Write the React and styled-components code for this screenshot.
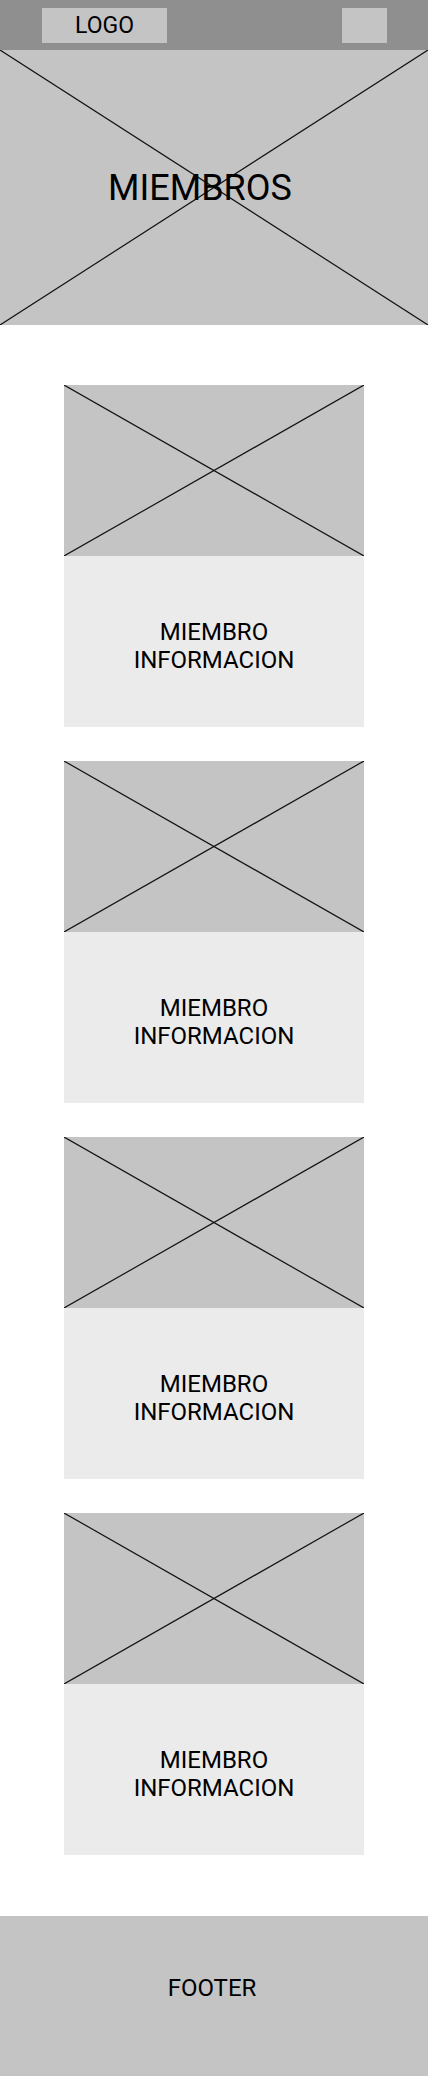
import React from 'react';
import styled, { createGlobalStyle } from 'styled-components';

const GlobalStyle = createGlobalStyle`
  body {
    margin: 0;
    font-family: Roboto, "Liberation Sans", sans-serif;
    color: #000;
    background: #fff;
  }
`;

const Page = styled.div`
  display: flex;
  flex-direction: column;
  width: 428px;
`;

const Header = styled.header`
  display: flex;
  justify-content: space-between;
  align-items: center;
  height: 50px;
  padding: 0 41px 0 42px;
  box-sizing: border-box;
  background: #8f8f8f;
`;

const LogoBox = styled.div`
  display: flex;
  align-items: center;
  justify-content: center;
  width: 125px;
  height: 35px;
  background: #c4c4c4;
  font-size: 23px;
`;

const MenuBox = styled.div`
  width: 45px;
  height: 35px;
  background: #c4c4c4;
`;

const Placeholder = styled.div`
  position: relative;
  display: flex;
  align-items: center;
  justify-content: center;
  height: ${(props) => props.height};
  background: #c4c4c4;
`;

const Cross = styled.svg`
  position: absolute;
  inset: 0;
  width: 100%;
  height: 100%;
`;

const HeroTitle = styled.h1`
  position: relative;
  margin: 0 28px 0 0;
  font-size: 36px;
  font-weight: 400;
`;

const MemberList = styled.main`
  display: flex;
  flex-direction: column;
  align-items: center;
  gap: 34px;
  padding: 60px 0 61px;
`;

const Card = styled.article`
  display: flex;
  flex-direction: column;
  width: 300px;
`;

const CardInfo = styled.div`
  display: flex;
  align-items: center;
  justify-content: center;
  height: 171px;
  padding-top: 8px;
  box-sizing: border-box;
  background: #ebebeb;
  font-size: 24px;
  line-height: 28px;
  text-align: center;
`;

const Footer = styled.footer`
  display: flex;
  align-items: center;
  justify-content: center;
  height: 160px;
  padding: 0 4px 16px 0;
  box-sizing: border-box;
  background: #c4c4c4;
  font-size: 24px;
`;

function CrossLines() {
  return (
    <Cross viewBox="0 0 100 100" preserveAspectRatio="none">
      <line x1="0" y1="0" x2="100" y2="100" stroke="#111" strokeWidth="1.2" vectorEffect="non-scaling-stroke" />
      <line x1="100" y1="0" x2="0" y2="100" stroke="#111" strokeWidth="1.2" vectorEffect="non-scaling-stroke" />
    </Cross>
  );
}

const members = [1, 2, 3, 4];

export default function App() {
  return (
    <Page>
      <GlobalStyle />
      <Header>
        <LogoBox>LOGO</LogoBox>
        <MenuBox />
      </Header>
      <Placeholder height="275px">
        <CrossLines />
        <HeroTitle>MIEMBROS</HeroTitle>
      </Placeholder>
      <MemberList>
        {members.map((id) => (
          <Card key={id}>
            <Placeholder height="171px">
              <CrossLines />
            </Placeholder>
            <CardInfo>
              MIEMBRO
              <br />
              INFORMACION
            </CardInfo>
          </Card>
        ))}
      </MemberList>
      <Footer>FOOTER</Footer>
    </Page>
  );
}
